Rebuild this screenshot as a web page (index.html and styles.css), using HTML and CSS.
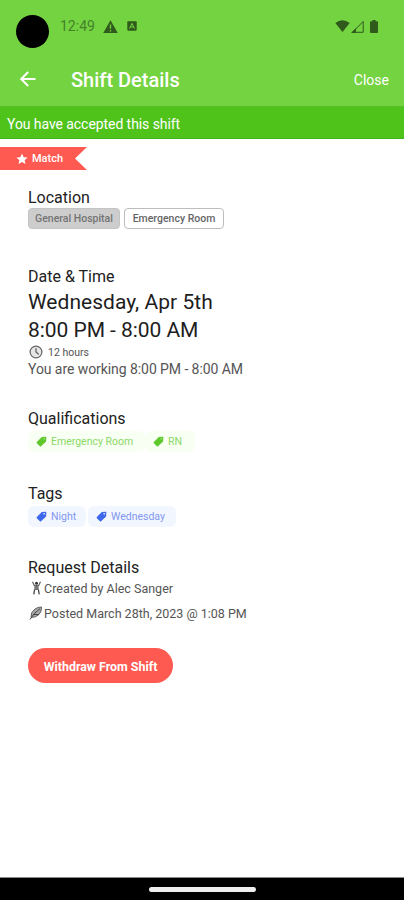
FILE: index.html
```
<!DOCTYPE html>
<html lang="en">
<head>
<meta charset="utf-8">
<title>Shift Details</title>
<link rel="stylesheet" href="styles.css">
</head>
<body>
<div class="screen">
  <div class="status">
    <span class="camera"></span>
    <span class="clock">12:49</span>
    <svg class="warn" viewBox="0 0 15 13"><path d="M7.5 .3 14.8 13H.2z" fill="#2f5a1b"/><path d="M7.5 4.5v4.2M7.5 10v1.5" stroke="#74d340" stroke-width="1.3"/></svg>
    <svg class="app" viewBox="0 0 10 10"><rect x=".3" y=".3" width="9.4" height="9.4" rx="1" fill="#2f5a1b"/><path d="M2.5 7.5 5 2.4l2.5 5.1M3.5 6h3" stroke="#74d340" fill="none"/></svg>
    <span class="grow"></span>
    <svg class="wifi" viewBox="0 0 15 12"><path d="M.3 3Q7.5-2.6 14.700 3L7.500 12z" fill="#2f5a1b"/></svg>
    <svg class="signal" viewBox="0 0 13 13"><path d="M1.500 12.300 12.200 1.400v10.900z" fill="none" stroke="#2f5a1b" stroke-width="1"/><path d="M0 13 5 8v5z" fill="#2f5a1b"/></svg>
    <svg class="battery" viewBox="0 0 8 13"><path d="M2.400 0h3.200v1.300H7q1 0 1 1V12q0 1-1 1H1q-1 0-1-1V2.300q0-1 1-1h1.400z" fill="#2f5a1b"/></svg>
  </div>
  <header class="bar">
    <svg class="back" viewBox="0 0 16 16"><path d="M15.500 8H1.500M8.200 1 1.200 8l7 7" fill="none" stroke="#fff" stroke-width="2"/></svg>
    <h1 class="title">Shift Details</h1>
    <span class="close">Close</span>
  </header>
  <div class="banner"><span>You have accepted this shift</span></div>
  <div class="ribbon">
    <svg class="star" viewBox="0 0 24 24"><path d="m12 1 3.300 7.300 7.900.8-6 5.300 1.800 7.800-7-4.100-7 4.100 1.800-7.800-6-5.300 7.900-.8z" fill="#fff"/></svg>
    <span>Match</span>
  </div>
  <main class="content">
    <section class="location">
      <h2>Location</h2>
      <div class="row">
        <span class="pill pill-fill">General Hospital</span>
        <span class="pill pill-line">Emergency Room</span>
      </div>
    </section>
    <section class="datetime">
      <h2>Date &amp; Time</h2>
      <div class="big day">Wednesday, Apr 5th</div>
      <div class="big hours">8:00 PM - 8:00 AM</div>
      <div class="duration">
        <svg class="clockicon" viewBox="0 0 14 14"><circle cx="7" cy="7" r="5.900" fill="#e6e6e6" stroke="#666" stroke-width="1.200"/><path d="M7 3.200V7l2.700 2.400" fill="none" stroke="#555" stroke-width="1.200"/></svg>
        <span>12 hours</span>
      </div>
      <div class="working">You are working 8:00 PM - 8:00 AM</div>
    </section>
    <section class="quals">
      <h2>Qualifications</h2>
      <div class="row tags green">
        <span class="tag q-er"><svg viewBox="0 0 12 12"><path d="M6.300 1 10.500.8q.8 0 .8.8L11 5.900 5.500 11.200q-.6.500-1.200 0L.9 7.800q-.6-.6 0-1.200z" fill="#5fc82c"/><circle cx="8.900" cy="3.100" r=".6" fill="#f6ffef"/></svg><b>Emergency Room</b></span>
        <span class="tag q-rn"><svg viewBox="0 0 12 12"><path d="M6.300 1 10.500.8q.8 0 .8.8L11 5.900 5.500 11.200q-.6.500-1.200 0L.9 7.800q-.6-.6 0-1.200z" fill="#5fc82c"/><circle cx="8.900" cy="3.100" r=".6" fill="#f6ffef"/></svg><b>RN</b></span>
      </div>
    </section>
    <section class="labels">
      <h2>Tags</h2>
      <div class="row tags blue">
        <span class="tag t-night"><svg viewBox="0 0 12 12"><path d="M6.300 1 10.500.8q.8 0 .8.8L11 5.900 5.500 11.200q-.6.500-1.200 0L.9 7.800q-.6-.6 0-1.200z" fill="#3d68ee"/><circle cx="8.900" cy="3.100" r=".9" fill="#f2f6ff"/></svg><b>Night</b></span>
        <span class="tag t-wed"><svg viewBox="0 0 12 12"><path d="M6.300 1 10.500.8q.8 0 .8.8L11 5.900 5.500 11.200q-.6.500-1.200 0L.9 7.800q-.6-.6 0-1.200z" fill="#3d68ee"/><circle cx="8.900" cy="3.100" r=".9" fill="#f2f6ff"/></svg><b>Wednesday</b></span>
      </div>
    </section>
    <section class="request">
      <h2>Request Details</h2>
      <div class="meta created-row">
        <svg class="person" viewBox="0 0 14 14"><circle cx="7.500" cy="2.200" r="1.500" fill="#333"/><path d="M3.500.8 5.300 4.500h4.400L11.500.8" fill="none" stroke="#555" stroke-width="1.100"/><path d="M5.300 4.500h4.400v4.500H5.300z" fill="#777"/><path d="M5.600 8.500 4.800 13.300M9.400 8.500l.8 4.800" fill="none" stroke="#444" stroke-width="1.300"/></svg>
        <span>Created by Alec Sanger</span>
      </div>
      <div class="meta posted-row">
        <svg class="feather" viewBox="0 0 14 14"><path d="M2 11.500Q1.200 6.500 6 3 9 .9 12.500 1q.3 4.500-2.500 7.500-3 3-8 3z" fill="#aaa" stroke="#555" stroke-width=".9"/><path d="M1 13.500Q4 7.500 11 2.700M4.500 8.500h5" fill="none" stroke="#444" stroke-width="1"/></svg>
        <span>Posted March 28th, 2023 @ 1:08 PM</span>
      </div>
    </section>
    <button class="withdraw">Withdraw From Shift</button>
  </main>
  <footer class="nav"><span class="handle"></span></footer>
</div>
</body>
</html>
```
FILE: styles.css
```
* { box-sizing: border-box; }
body { margin: 0; background: #fff; font-family: Roboto, "Liberation Sans", sans-serif; }
.screen { width: 404px; height: 900px; display: flex; flex-direction: column; overflow: hidden; }
svg { display: block; flex: none; }
span, b { white-space: nowrap; }
h1, h2 { margin: 0; font-weight: 500; }

.status { height: 53px; background: #74d340; display: flex; align-items: center; padding: 0 26px 0 16px; flex: none; }
.camera { width: 33px; height: 33px; border-radius: 50%; background: #000; margin-top: 10px; }
.clock { font-size: 14px; color: #44822a; margin: -1px 0 0 11px; width: 35px; }
.warn { width: 15px; height: 13px; margin: -1px 0 0 8px; }
.app { width: 10px; height: 10px; margin: -1px 0 0 9px; }
.grow { flex: 1; }
.wifi { width: 15px; height: 12px; margin-top: -2px; }
.signal { width: 13px; height: 13px; margin: -1px 0 0 1px; }
.battery { width: 8px; height: 13px; margin: -1px 0 0 6px; }

.bar { height: 53px; background: #74d340; color: #fff; display: flex; align-items: center; padding: 0 15px 0 20px; flex: none; }
.back { width: 16px; height: 16px; margin-top: -1px; }
.title { margin-left: 35px; font-size: 20px; line-height: 24px; flex: 1; }
.close { font-size: 14px; }

.banner { height: 33px; background: #50c31b; color: #fff; border-top: 1px solid #5abd2c; border-bottom: 1px solid #3db51b; display: flex; align-items: center; padding: 2px 7px 0; font-size: 14px; letter-spacing: -.07px; flex: none; }

.ribbon { width: 87px; height: 23px; margin-top: 8px; background: #ff5a51; color: #fff; display: flex; align-items: center; padding-left: 16px; gap: 4px; font-size: 11px; font-weight: 500; clip-path: polygon(0 0, 100% 0, 75px 50%, 100% 100%, 0 100%); flex: none; }
.star { width: 12px; height: 12px; }

.content { flex: 1; padding: 18px 28px 0; }
h2 { font-size: 16px; line-height: 20px; height: 20px; color: #222; font-weight: 400; }
.row { display: flex; }
.location { height: 79px; }
.location .row { gap: 4px; }
.pill { height: 21px; border-radius: 4px; font-size: 10.500px; display: flex; align-items: center; justify-content: center; font-weight: 500; }
.pill-fill { width: 92px; background: #cdcdcd; border: 1px solid #c4c4c4; color: #737373; }
.pill-line { width: 100px; background: #fff; border: 1px solid #bdbdbd; color: #666; }

.datetime { height: 142px; }
.big { font-size: 21px; line-height: 28px; height: 28px; color: #1d1d1d; }
.day { margin-top: 1px; letter-spacing: .03px; }
.hours { letter-spacing: -.05px; }
.duration { height: 15px; margin-top: 1px; display: flex; align-items: center; gap: 5px; font-size: 10.500px; color: #555; padding-left: 1px; }
.clockicon { width: 14px; height: 14px; margin-top: -1px; }
.working { font-size: 14px; line-height: 20px; color: #555; letter-spacing: -.07px; margin-top: -1px; }

.quals { height: 75px; }
.labels { height: 74px; }
.tags { margin-top: 2px; }
.tag { height: 21px; border-radius: 6px; display: flex; align-items: center; padding-left: 8px; gap: 4px; font-size: 10.500px; }
.tag svg { width: 11px; height: 11px; }
.tag b { font-weight: 400; }
.green .tag { background: #f8fff3; color: #8bd967; }
.blue .tag { background: #f2f6ff; color: #8298f0; }
.q-er { width: 117px; }
.q-rn { width: 50px; }
.blue { gap: 2px; }
.t-night { width: 58px; }
.t-wed { width: 88px; }

.request { height: 90px; }
.meta { height: 22px; display: flex; align-items: center; gap: 1px; font-size: 12.500px; color: #555; padding-left: 1px; }
.created-row { margin-top: -1px; }
.posted-row { margin-top: 3px; }
.meta svg { width: 14px; height: 14px; }

.withdraw { display: flex; align-items: center; justify-content: center; width: 145px; height: 35px; border: 0; border-radius: 18px; background: #ff5a51; color: #fff; font: 700 12.400px Roboto, "Liberation Sans", sans-serif; padding: 1px 0 0; }

.nav { height: 23px; background: #000; flex: none; display: flex; align-items: center; justify-content: center; border-top: 1px solid #888; }
.handle { width: 107px; height: 5px; border-radius: 3px; background: #eee; }
```
